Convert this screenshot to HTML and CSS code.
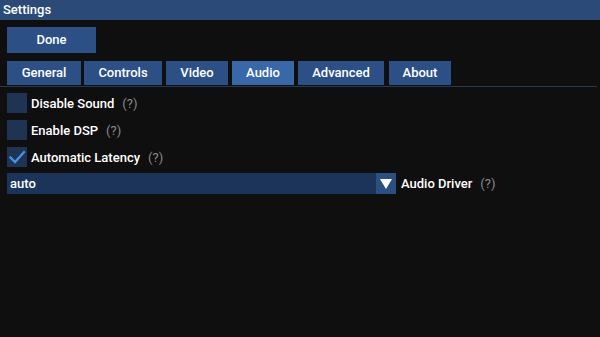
FILE: index.html
```html
<!DOCTYPE html>
<html>
<head>
<meta charset="utf-8">
<link rel="stylesheet" href="styles.css">
</head>
<body>
<div class="titlebar">Settings</div>
<div class="content">
  <div class="done">Done</div>
  <div class="tabs">
    <div class="tab t-general">General</div>
    <div class="tab t-controls">Controls</div>
    <div class="tab t-video">Video</div>
    <div class="tab t-audio active">Audio</div>
    <div class="tab t-advanced">Advanced</div>
    <div class="tab t-about">About</div>
  </div>
  <div class="rows">
    <div class="row">
      <span class="box"></span>
      <span class="label">Disable Sound</span>
      <span class="help">(?)</span>
    </div>
    <div class="row">
      <span class="box"></span>
      <span class="label">Enable DSP</span>
      <span class="help">(?)</span>
    </div>
    <div class="row">
      <span class="box">
        <svg width="20" height="20" viewBox="0 0 20 20"><path d="M3.5 10.5 L8 15 L17 5" fill="none" stroke="#4394ea" stroke-width="2.3" stroke-linecap="square"/></svg>
      </span>
      <span class="label">Automatic Latency</span>
      <span class="help">(?)</span>
    </div>
    <div class="row select-row">
      <div class="select">
        <span class="value">auto</span>
        <span class="arrow"><svg width="12" height="10" viewBox="0 0 12 10"><path d="M0 0 H12 L6 10 Z" fill="#ffffff"/></svg></span>
      </div>
      <span class="label">Audio Driver</span>
      <span class="help">(?)</span>
    </div>
  </div>
</div>
</body>
</html>
```
FILE: styles.css
```css
html, body {
  margin: 0;
  padding: 0;
  background: #0f0f10;
  width: 600px;
  height: 337px;
  overflow: hidden;
  font-family: Roboto, "Liberation Sans", sans-serif;
  color: #ffffff;
}
.titlebar {
  height: 20px;
  background: #2b4a78;
  font-size: 13px;
  font-weight: 500;
  line-height: 20px;
  padding-left: 3px;
}
.content {
  padding: 7px 3px 0 7px;
}
.done {
  width: 89px;
  height: 26px;
  background: #2c5086;
  font-size: 13px;
  font-weight: 500;
  line-height: 26px;
  text-align: center;
}
.tabs {
  display: flex;
  gap: 4px;
  margin-top: 8px;
  margin-left: -7px;
  padding-left: 7px;
  border-bottom: 1px solid #28394b;
  padding-bottom: 1px;
}
.tab {
  height: 24px;
  line-height: 24px;
  background: #2c5086;
  font-size: 13px;
  font-weight: 500;
  text-align: center;
}
.tab.active { background: #3868a8; }
.t-general { width: 74px; margin-right: -1px; }
.t-controls { width: 78px; }
.t-video { width: 62px; }
.t-audio { width: 62px; }
.t-advanced { width: 86px; margin-right: 1px; }
.t-about { width: 62px; }
.rows {
  display: flex;
  flex-direction: column;
  gap: 7px;
  margin-top: 6px;
}
.row {
  display: flex;
  align-items: center;
  height: 20px;
}
.box {
  width: 20px;
  height: 20px;
  background: #1f3352;
  display: flex;
  margin-right: 4px;
}
.label {
  font-size: 13px;
  font-weight: 500;
}
.help {
  font-size: 13px;
  color: #8a8a8a;
  margin-left: 8px;
}
.select-row {
  height: 21px;
  margin-top: -1px;
}
.select {
  width: 389px;
  height: 21px;
  background: #1c3459;
  display: flex;
  align-items: center;
  justify-content: space-between;
  margin-right: 5px;
}
.value {
  font-size: 13px;
  font-weight: 500;
  padding-left: 3px;
}
.arrow {
  width: 20px;
  height: 21px;
  background: #2c4f82;
  display: flex;
  align-items: center;
  justify-content: center;
}
```
